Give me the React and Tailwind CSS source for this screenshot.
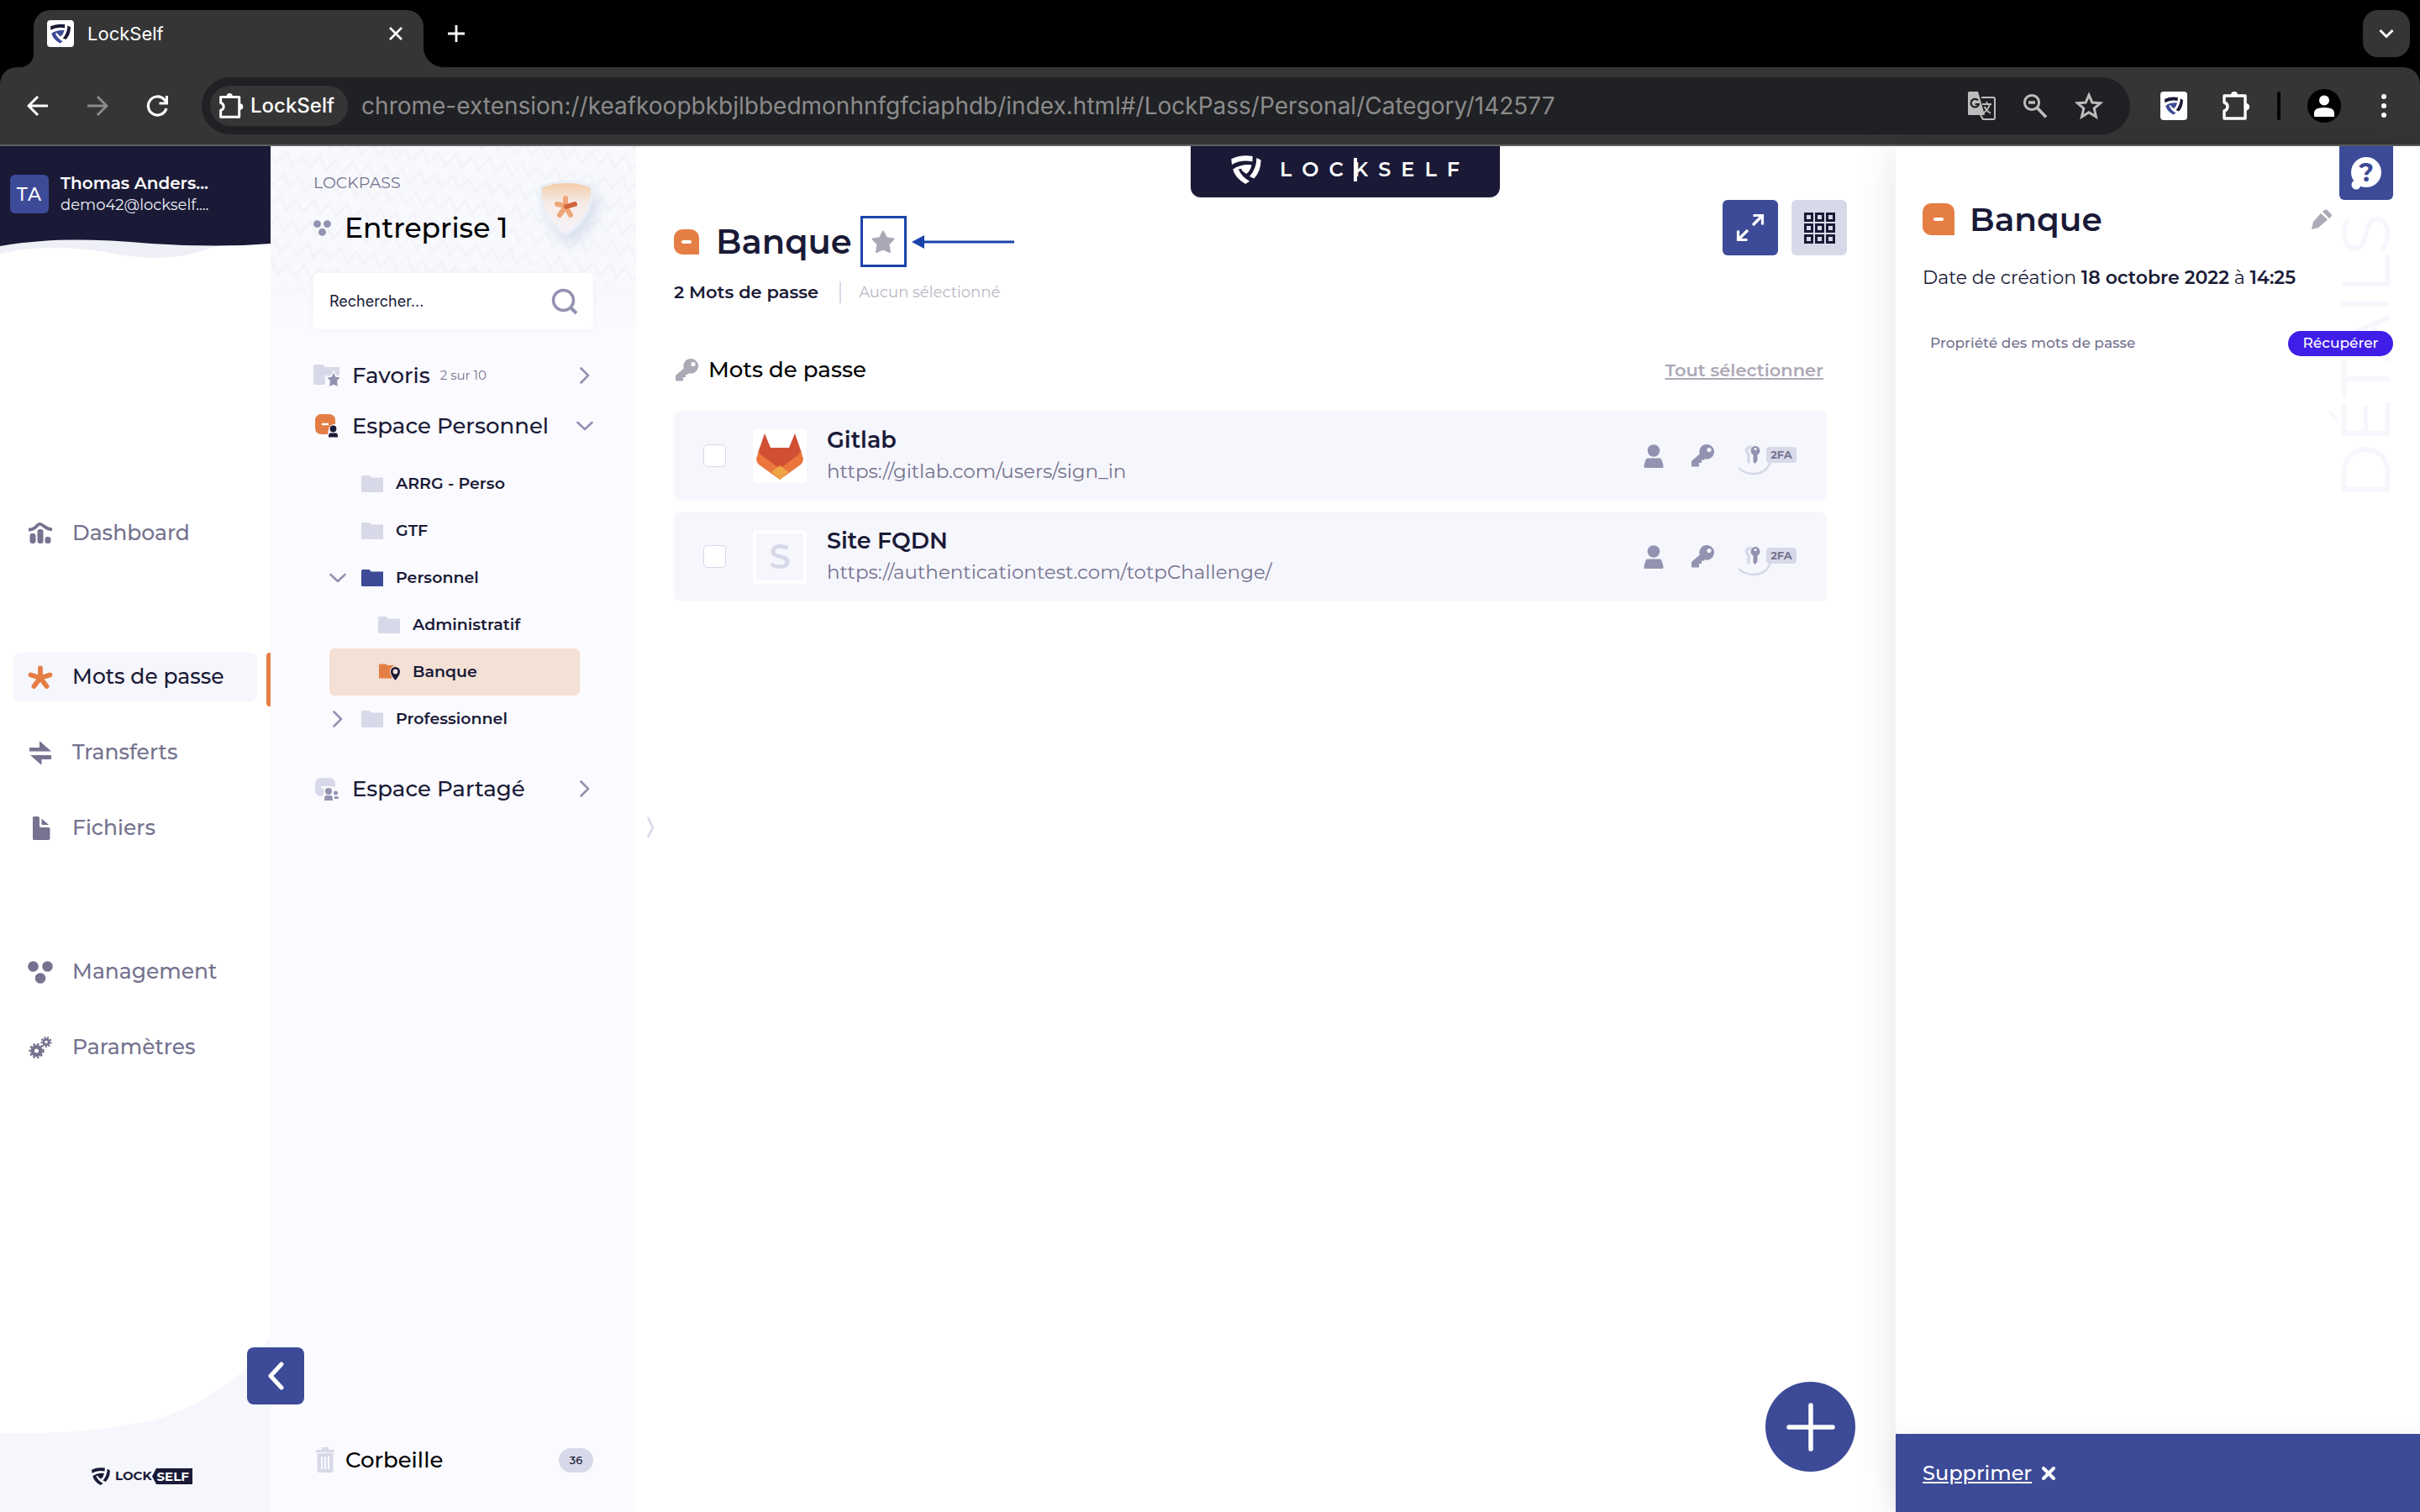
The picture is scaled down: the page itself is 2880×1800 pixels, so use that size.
import React, { useState } from "react";
import clsx from "clsx";

/* =========================
   DATA
   ========================= */
const NAV_GROUPS = [
  [{ id: "dashboard", label: "Dashboard" }],
  [
    { id: "passwords", label: "Mots de passe" },
    { id: "transfers", label: "Transferts" },
    { id: "files", label: "Fichiers" },
  ],
  [
    { id: "management", label: "Management" },
    { id: "settings", label: "Paramètres" },
  ],
];

const TREE = [
  { label: "ARRG - Perso", level: 1 },
  { label: "GTF", level: 1 },
  { label: "Personnel", level: 1, open: true, folder: "text-[#3c4a97]" },
  { label: "Administratif", level: 2 },
  { label: "Banque", level: 2, current: true },
  { label: "Professionnel", level: 1, open: false },
];

const PASSWORDS = [
  { name: "Gitlab", url: "https://gitlab.com/users/sign_in", logo: "gitlab" },
  { name: "Site FQDN", url: "https://authenticationtest.com/totpChallenge/" },
];

/* =========================
   ICONS
   ========================= */
const Shield = ({ className, accent = "currentColor" }) => (
  <svg viewBox="0 0 107 103" className={className} fill="currentColor" aria-hidden="true">
    <path d="M0 13Q35-4 77 3L76 22Q35 14 2 33Z" />
    <path d="M91 9L107 17Q106 60 82 83L66 76Q92 45 91 9Z" />
    <path fill={accent} d="M6 50Q35 30 73 34Q70 55 54 67L39 55L36 48L26 50Q38 78 66 93L51 103Q12 80 6 50Z" />
  </svg>
);

const Puzzle = ({ className }) => (
  <svg viewBox="0 0 34 36" className={className} fill="none" stroke="currentColor" strokeWidth="3.4" strokeLinejoin="round" aria-hidden="true">
    <path d="M3 6H28V33H3V24Q7 23 7 19Q7 15 3 14Z" />
    <path d="M11 5a4 4 0 0 1 8 0zM29 15a4.200 4.200 0 0 1 0 8.400z" fill="currentColor" stroke="none" />
  </svg>
);

const Chevron = ({ dir = "right", className = "text-[#9392b0]" }) => (
  <svg
    viewBox="0 0 20 20"
    className={clsx("size-5 shrink-0", className)}
    fill="none"
    stroke="currentColor"
    strokeWidth="2.600"
    strokeLinecap="round"
    strokeLinejoin="round"
    aria-hidden="true"
  >
    <path d={dir === "down" ? "M1.500 6L10 14L18.500 6" : "M5.500 1.500L14 10L5.500 18.500"} />
  </svg>
);

const Folder = ({ className = "text-[#d8d9e8]" }) => (
  <svg viewBox="0 0 26 20" className={clsx("h-5 w-[26px] shrink-0", className)} fill="currentColor" aria-hidden="true">
    <path d="M0 2Q0 0 2 0H9Q10 0 10.500 1T12 2.500H26V20H1.500Q0 20 0 18.500Z" />
  </svg>
);

const FolderPin = () => (
  <svg viewBox="0 0 26 20" className="h-5 w-[26px] shrink-0" aria-hidden="true">
    <path fill="#e57e45" d="M1 2Q1 .5 2.500 .5H9Q10 .5 10.500 2H20Q14 4 14 9.500Q14 13 17 17.500H1Z" />
    <path fill="#1a1a37" fillRule="evenodd" d="M20.500 4A5.400 5.400 0 0 1 26 9.500Q26 13.500 20.500 20Q15 13.500 15 9.500A5.400 5.400 0 0 1 20.500 4ZM20.500 6.600A2.900 2.900 0 1 0 20.500 12.400A2.900 2.900 0 1 0 20.500 6.600Z" />
  </svg>
);

const STAR = "M14 1.500L18 9.200L26.500 10.500L20.500 16.800L22 26L14 22.500L6 26L7.500 16.800L1.500 10.500L10 9.200Z";

const Star = ({ className }) => (
  <svg viewBox="0 0 28 28" className={className} fill="currentColor" stroke="currentColor" strokeWidth="2" strokeLinejoin="round" aria-hidden="true">
    <path d={STAR} />
  </svg>
);

const Key = ({ className }) => (
  <svg viewBox="0 0 27 27" className={className} fill="currentColor" aria-hidden="true">
    <path fillRule="evenodd" d="M18.500 0A8.800 8.800 0 1 1 15.600 17.200L14.500 18.800H12V22H9V26.500H0V20L9.800 11.500A8.800 8.800 0 0 1 18.500 0ZM21 4A2.600 2.600 0 1 0 21 9.200A2.600 2.600 0 1 0 21 4Z" />
  </svg>
);

const Person = ({ className }) => (
  <svg viewBox="0 0 24 28" className={className} fill="currentColor" aria-hidden="true">
    <circle cx="12" cy="7.500" r="7.300" />
    <path d="M4.500 16.500H19.500Q21 16.500 22 20Q24 26 23.500 27Q23 28 22 28H2Q.5 28 .5 26.500Q.5 24 2 20Q3 16.500 4.500 16.500Z" />
  </svg>
);

const TwoFactor = () => (
  <span className="relative flex h-9 w-[69px] items-start justify-end pt-0.5">
    <svg viewBox="0 0 69 36" className="absolute inset-0 h-9 w-[69px]" aria-hidden="true">
      <path d="M1 28Q10 35 20 34Q33 33 38 20" fill="none" stroke="#d8d9e8" strokeWidth="2.600" strokeLinecap="round" />
      <path d="M14 2Q6 5 12 11V20" fill="none" stroke="#d8d9e8" strokeWidth="3.600" strokeLinecap="round" />
      <path fill="#9392b0" fillRule="evenodd" d="M20 1A5.600 5.600 0 0 1 22.500 11.500V18L20 22L17.500 20V11.500A5.600 5.600 0 0 1 20 1ZM20 3A1.600 1.600 0 1 0 20 6.200A1.600 1.600 0 1 0 20 3Z" />
    </svg>
    <span className="relative h-[19px] w-9 rounded bg-[#d8d9e8] text-center text-[13px] leading-[19px] font-bold text-[#75738f]">2FA</span>
  </span>
);

const Dots3 = ({ className }) => (
  <svg viewBox="0 0 30 27" className={className} fill="currentColor" aria-hidden="true">
    <circle cx="6.500" cy="6.500" r="6.300" />
    <circle cx="23.500" cy="6.500" r="6.300" />
    <circle cx="15" cy="20.500" r="6.300" />
  </svg>
);

const Asterisk = ({ className }) => (
  <svg viewBox="0 0 30 28" className={className} fill="none" stroke="currentColor" strokeWidth="5.800" strokeLinecap="round" aria-hidden="true">
    <path d="M15 15V3.500M15 15L3.500 11.500M15 15L26.500 11.500M15 15L7.500 25M15 15L22.500 25" />
  </svg>
);

const Gear = ({ cx, cy, r, w }) => (
  <g fill="none" stroke="currentColor">
    <circle cx={cx} cy={cy} r={r} strokeWidth={w} />
    <circle cx={cx} cy={cy} r={r + w / 2 + 0.8} strokeWidth="2.400" strokeDasharray={r > 4 ? "2.500 2.200" : "2 1.700"} />
  </g>
);

const NavIcon = ({ id }) => {
  if (id === "passwords") return <Asterisk className="h-7 w-[30px]" />;
  if (id === "management") return <Dots3 className="h-[27px] w-[30px]" />;
  return (
    <svg viewBox="0 0 30 28" className="h-7 w-[30px]" fill="currentColor" aria-hidden="true">
      {id === "dashboard" && (
        <>
          <path d="M1 9.500Q7 9.500 10 6T15 3T20 6T29 9.500" fill="none" stroke="currentColor" strokeWidth="3.800" />
          <rect x="2.500" y="14" width="7" height="12" rx="3" />
          <rect x="11.500" y="9" width="7" height="17" rx="3" />
          <rect x="20.500" y="18" width="7" height="8" rx="3" />
        </>
      )}
      {id === "transfers" && <path d="M2 8H14V0L28 12.500H2ZM28 17V22H16.500V29L3 17Z" />}
      {id === "files" && (
        <>
          <path d="M6 1.500Q6 0 7.500 0H12Q14 0 14 2V11Q14 13 16 13H25Q26.500 13 26.500 14.500V26Q26.500 28 24.500 28H7.500Q6 28 6 26.500Z" />
          <path d="M16.500 2.500L25 10H17.500Q16.500 10 16.500 9Z" />
        </>
      )}
      {id === "settings" && (
        <>
          <Gear cx={10.5} cy={18} r={4.8} w={4.6} />
          <Gear cx={22} cy={7.5} r={3.2} w={2.8} />
        </>
      )}
    </svg>
  );
};

const Gitlab = () => (
  <svg viewBox="0 0 56 56" className="size-14" aria-hidden="true">
    <path fill="#d14f33" d="M10 1L17 18H39L46 1L54 24L28 56L2 24Z" />
    <path fill="#eb763c" d="M3 22L28 41L53 22L56 31Q56 35 53 38L28 56L3 38Q0 35 0 31Z" />
    <path fill="#d14f33" d="M10 18H46L52 25L28 43L4 25Z" />
    <path fill="#eea445" d="M28 39L38 47L28 56L18 47Z" />
  </svg>
);

// orange tile with the sharp bottom-right corner
const Tile = ({ className }) => (
  <span className={clsx("flex shrink-0 items-center justify-center rounded-[10px] rounded-br-none bg-[#e57e45]", className)}>
    <span className="h-1 w-3 rounded-full bg-white" />
  </span>
);

const SpaceIcon = ({ kind }) => (
  <svg viewBox="0 0 32 30" className="h-[30px] w-8 shrink-0" aria-hidden="true">
    {kind === "fav" && (
      <>
        <path fill="#d8d9e8" d="M0 4Q0 2 2 2H11Q13 2 13.500 5H31V15H14V26H2Q0 26 0 24Z" />
        <path fill="#9392b0" stroke="#fbfaff" strokeWidth="1.500" d="M24 10L26.800 16L33 17L28.800 21.500L29.800 29L24 26.500L18.200 29L19.200 21.500L15 17L21.200 16Z" />
      </>
    )}
    {kind === "personal" && (
      <>
        <path fill="#e57e45" d="M10 1H18Q26 1 26 9V13Q19 13 18 19L17 25H10Q2 25 2 17V9Q2 1 10 1Z" />
        <path stroke="#fff" strokeWidth="2.500" strokeLinecap="round" d="M11 13H17" />
        <circle cx="23.500" cy="18.500" r="3.900" fill="#1a1a37" />
        <path fill="#1a1a37" d="M20 23.500H27Q29 23.500 29 28.500H18Q18 23.500 20 23.500Z" />
      </>
    )}
    {kind === "shared" && (
      <>
        <path fill="#d8d9e8" d="M10 2H18Q26 2 26 10V13Q22 12 19 12H9V14Q12 14 13 17L11 24Q2 24 2 16V10Q2 2 10 2Z" />
        <circle cx="18" cy="18" r="4" fill="#9392b0" />
        <circle cx="26.500" cy="20" r="2.500" fill="#9392b0" />
        <path fill="#9392b0" d="M15 23H21Q23 23 23 29H13Q13 23 15 23ZM25 24H28Q30 24 30 27H25Z" />
      </>
    )}
  </svg>
);

/* =========================
   BROWSER
   ========================= */
const TabStrip = () => (
  <div className="flex h-20 items-end bg-black pr-3 text-white">
    <div className="size-6 shrink-0 self-end" />
    <div className="h-6 w-4 shrink-0 bg-[#353535]">
      <div className="size-full rounded-br-[16px] bg-black" />
    </div>
    <div className="flex h-[68px] w-[464px] items-center rounded-t-[20px] bg-[#353535] pr-6 pb-3 pl-4">
      <span className="flex size-8 items-center justify-center rounded-sm bg-white text-[#1a1a37]">
        <Shield className="h-6 w-6" accent="#3c4a97" />
      </span>
      <span className="ml-4 flex-1 text-[22px]">LockSelf</span>
      <button type="button" aria-label="Fermer l’onglet">
        <svg viewBox="0 0 18 18" className="size-[18px]" stroke="currentColor" strokeWidth="2.600">
          <path d="M2 2L16 16M16 2L2 16" />
        </svg>
      </button>
    </div>
    <div className="h-6 w-6 shrink-0 bg-[#353535]">
      <div className="size-full rounded-bl-[24px] bg-black" />
    </div>
    <button type="button" aria-label="Nouvel onglet" className="mb-[29px] ml-1">
      <svg viewBox="0 0 22 22" className="size-[22px]" stroke="currentColor" strokeWidth="2.800">
        <path d="M11 1V21M1 11H21" />
      </svg>
    </button>
    <button type="button" aria-label="Rechercher des onglets" className="mb-3 ml-auto flex size-14 items-center justify-center rounded-[18px] bg-[#353535]">
      <svg viewBox="0 0 18 18" className="size-[18px]" fill="none" stroke="currentColor" strokeWidth="3">
        <path d="M1.500 5L9 12.500L16.500 5" />
      </svg>
    </button>
  </div>
);

const Toolbar = () => (
  <div className="bg-black">
    <div className="flex h-[94px] items-center rounded-t-[20px] border-b-2 border-[#5f5f5f] bg-[#353535] pr-10 pl-8 text-white">
      <button type="button" aria-label="Retour">
        <svg viewBox="0 0 26 26" className="size-[26px]" fill="none" stroke="currentColor" strokeWidth="3">
          <path d="M25 13H3M13 2L2 13L13 24" />
        </svg>
      </button>
      <button type="button" aria-label="Avancer" className="ml-[45px] text-[#8b8b8b]">
        <svg viewBox="0 0 26 26" className="size-[26px]" fill="none" stroke="currentColor" strokeWidth="3">
          <path d="M1 13H23M13 2L24 13L13 24" />
        </svg>
      </button>
      <button type="button" aria-label="Actualiser" className="ml-[45px]">
        <svg viewBox="0 0 26 26" className="size-[26px]" fill="none" stroke="currentColor" strokeWidth="3.200">
          <path d="M24 16A11 11 0 1 1 21.500 5.500L24.500 9M24.500 1V10H15.500" />
        </svg>
      </button>
      <div className="ml-10 flex h-[68px] flex-1 items-center rounded-full bg-[#202124] pr-8 pl-2.5">
        <span className="flex h-12 items-center gap-2 rounded-full bg-[#353535] pr-4 pl-2.5 text-[24px] font-medium">
          <Puzzle className="h-8 w-[30px]" />
          LockSelf
        </span>
        <span className="ml-4 flex-1 text-[28px] text-[#8b8b8b]">
          chrome-extension://keafkoopbkbjlbbedmonhnfgfciaphdb/index.html#/LockPass/Personal/Category/142577
        </span>
        <div className="flex items-center gap-8 text-[#bdbdbd]">
          <button type="button" aria-label="Traduire">
            <svg viewBox="0 0 34 36" className="h-9 w-[34px]" aria-hidden="true">
              <path d="M17 8H31Q33 8 33 10V32Q33 34 31 34H19L16 29" fill="none" stroke="currentColor" strokeWidth="2" />
              <path d="M2.500 1H13L21 29H2.500Q1 29 1 27.500V2.500Q1 1 2.500 1Z" fill="currentColor" />
              <path d="M13 11.500A4.800 4.800 0 1 0 14 16H9.500" fill="none" stroke="#202124" strokeWidth="2.200" />
              <path d="M18 16H29M23.500 13V16M27 16Q25 23 19 27M20.500 19Q23 24 28 27" fill="none" stroke="currentColor" strokeWidth="1.800" />
            </svg>
          </button>
          <button type="button" aria-label="Zoom">
            <svg viewBox="0 0 30 30" className="size-[30px]" fill="none" stroke="currentColor" strokeWidth="3" aria-hidden="true">
              <circle cx="11" cy="11" r="8.600" />
              <path d="M17.500 17.500L28 28.500M7 11H15" strokeWidth="3.600" />
            </svg>
          </button>
          <button type="button" aria-label="Ajouter aux favoris">
            <svg viewBox="0 0 34 34" className="size-[34px]" fill="none" stroke="currentColor" strokeWidth="3" aria-hidden="true">
              <path d="M17 4L20.800 13L30.500 13.800L23.200 20L25.500 30L17 24.800L8.500 30L10.800 20L3.500 13.800L13.200 13Z" />
            </svg>
          </button>
        </div>
      </div>
      <button type="button" aria-label="Extension LockSelf" className="ml-9 flex h-[34px] w-8 items-center justify-center rounded bg-white text-[#1a1a37]">
        <Shield className="h-[22px] w-[22px]" accent="#3c4a97" />
      </button>
      <button type="button" aria-label="Extensions" className="ml-[41px]">
        <Puzzle className="h-9 w-[34px]" />
      </button>
      <span className="ml-8 h-[34px] w-1 rounded-full bg-black" />
      <button type="button" aria-label="Profil" className="ml-8 flex size-10 items-center justify-center rounded-full bg-black">
        <svg viewBox="0 0 24 26" className="h-[26px] w-6" fill="currentColor" aria-hidden="true">
          <circle cx="12" cy="6.500" r="6" />
          <path d="M0 26V21Q0 15 12 15T24 21V26Z" />
        </svg>
      </button>
      <button type="button" aria-label="Menu" className="ml-12 flex flex-col gap-[5px]">
        <span className="size-1.5 rounded-full bg-white" />
        <span className="size-1.5 rounded-full bg-white" />
        <span className="size-1.5 rounded-full bg-white" />
      </button>
    </div>
  </div>
);

/* =========================
   LEFT RAIL
   ========================= */
const Rail = () => (
  <aside className="relative flex w-[322px] shrink-0 flex-col bg-white">
    <div className="relative h-[136px]">
      <svg viewBox="0 0 322 136" preserveAspectRatio="none" className="absolute inset-0 size-full" aria-hidden="true">
        <path fill="#eff0f7" d="M0 100H322V112Q275 113 255 120Q220 133 185 133Q160 133 125 126Q55 115 0 128Z" />
        <path fill="#1a1a37" d="M0 0H322V116Q260 121 180 116Q100 109 50 113Q20 115 0 119Z" />
      </svg>
      <div className="relative flex items-center pt-[31px] pl-3 text-white">
        <span className="flex size-[46px] items-center justify-center rounded-md bg-[#3c4a97] text-[22px] font-medium tracking-wider">TA</span>
        <div className="ml-3.5">
          <p className="text-[20px] leading-[26px] font-semibold">Thomas Anders...</p>
          <p className="text-[18px] leading-[26px] text-[#eff0f7]">demo42@lockself....</p>
        </div>
      </div>
    </div>

    <nav className="mt-[296px] flex flex-col gap-[113px]">
      {NAV_GROUPS.map((group) => (
        <ul key={group[0].id} className="flex flex-col gap-8">
          {group.map((item) => {
            const active = item.id === "passwords";
            return (
              <li key={item.id} className="flex justify-between">
                <a
                  href={`#${item.id}`}
                  className={clsx(
                    "ml-4 flex h-[58px] w-[290px] items-center gap-[23px] rounded-lg pl-[17px] text-[25px] font-medium",
                    active ? "bg-[#f6f6fd] text-[#1a1a37]" : "text-[#75738f]",
                  )}
                >
                  <span className={clsx(active && "text-[#e57e45]")}>
                    <NavIcon id={item.id} />
                  </span>
                  {item.label}
                </a>
                {active && <span className="-mb-1.5 w-[5px] rounded-l bg-[#e57e45]" />}
              </li>
            );
          })}
        </ul>
      ))}
    </nav>

    <div className="relative mt-auto flex h-[220px] items-end pb-8 pl-[109px]">
      <svg viewBox="0 0 322 220" preserveAspectRatio="none" className="absolute inset-0 size-full" aria-hidden="true">
        <path fill="#f6f6fd" d="M0 126Q110 128 185 110Q245 92 294 48L322 10V220H0Z" />
      </svg>
      <span className="relative flex h-[22px] items-center text-[15px] font-bold text-[#1a1a37]">
        <Shield className="mr-1.5 h-[21px] w-[22px]" />
        LOCK
        <svg viewBox="0 0 6 19" className="h-[19px] w-1.5" fill="currentColor" aria-hidden="true">
          <path d="M6 0V19H5L0 9.500L5 0Z" />
        </svg>
        <span className="bg-[#1a1a37] pr-1 leading-[19px] text-white">SELF</span>
      </span>
    </div>

    <button
      type="button"
      aria-label="Réduire le menu"
      className="absolute bottom-32 left-[294px] z-10 flex size-[68px] items-center justify-center rounded-lg bg-[#3c4a97] text-white"
    >
      <svg viewBox="0 0 20 34" className="h-[34px] w-5" fill="none" stroke="currentColor" strokeWidth="5" strokeLinecap="round" strokeLinejoin="round">
        <path d="M17 3L4 17L17 31" />
      </svg>
    </button>
  </aside>
);

/* =========================
   CATEGORIES
   ========================= */
const Space = ({ kind, label, hint, dir }) => (
  <button type="button" className="flex h-[60px] w-full items-center text-left">
    <SpaceIcon kind={kind} />
    <span className="ml-3.5 text-[26px] font-medium text-[#1a1a37]">{label}</span>
    {hint && <span className="ml-3 text-[15px] text-[#75738f]">{hint}</span>}
    <Chevron dir={dir} className="ml-auto text-[#9392b0]" />
  </button>
);

const Categories = () => {
  const [query, setQuery] = useState("");

  return (
    <section className="relative flex w-[435px] shrink-0 flex-col bg-[#fbfaff] pr-[51px] pl-[51px]">
      {/* woven header background */}
      <svg className="absolute inset-x-0 top-0 h-[210px] w-full" aria-hidden="true">
        <defs>
          <pattern id="weave" width="40" height="26" patternUnits="userSpaceOnUse" patternTransform="rotate(8)">
            <rect width="40" height="26" fill="#f8f9fc" />
            <path d="M0 8L9 20L20 4L29 20L40 4" fill="none" stroke="#f2f4f9" strokeWidth="3" />
          </pattern>
          <linearGradient id="weaveFade" x1="0" x2="0" y1="0" y2="1">
            <stop offset=".7" stopColor="#fbfaff" stopOpacity="0" />
            <stop offset="1" stopColor="#fbfaff" />
          </linearGradient>
        </defs>
        <rect width="100%" height="100%" fill="url(#weave)" />
        <rect width="100%" height="100%" fill="url(#weaveFade)" />
      </svg>

      <div className="relative flex h-[151px] justify-between pt-[31px]">
        <div>
          <p className="text-[19px] leading-[26px] text-[#75738f]">LOCKPASS</p>
          <h2 className="mt-5 flex items-center gap-4 text-[33px] leading-10 font-medium text-black">
            <Dots3 className="h-[19px] w-[21px] text-[#9392b0]" />
            Entreprise 1
          </h2>
        </div>
        <svg viewBox="0 0 80 90" className="mt-1 -mr-2 h-[90px] w-20 overflow-visible" aria-hidden="true">
          <defs>
            <linearGradient id="shieldFill" x1="0" x2="0" y1="0" y2="1">
              <stop offset="0" stopColor="#f3cba3" />
              <stop offset=".4" stopColor="#f6ebe8" />
              <stop offset="1" stopColor="#f5f3f8" />
            </linearGradient>
            <filter id="shieldShadow" x="-50%" y="-50%" width="200%" height="200%">
              <feDropShadow dx="6" dy="10" stdDeviation="8" floodColor="#b9c5e2" floodOpacity=".5" />
            </filter>
          </defs>
          <path
            d="M10 13Q40 2 70 13Q74 45 42 69Q39 71 36 69Q6 45 10 13Z"
            fill="url(#shieldFill)"
            stroke="#eaeef8"
            strokeWidth="3"
            filter="url(#shieldShadow)"
          />
          <g fill="none" strokeWidth="6" strokeLinecap="round">
            <path stroke="#eea578" d="M39 36V27M39 36L29 34M39 37L32 47M39 37L45 47" />
            <path stroke="#d2673c" d="M40 37L50 34" />
          </g>
        </svg>
      </div>

      <label className="relative flex h-[67px] items-center rounded-md bg-white pr-[18px] pl-[19px] shadow-[0_2px_10px_rgba(26,26,55,0.04)]">
        <input
          value={query}
          onChange={(e) => setQuery(e.target.value)}
          placeholder="Rechercher..."
          aria-label="Rechercher"
          className="w-0 flex-1 bg-transparent font-[Inter,sans-serif] text-[18px] text-[#1a1a37] outline-none placeholder:text-[#1a1a37]"
        />
        <svg viewBox="0 0 32 32" className="size-8 text-[#9392b0]" fill="none" stroke="currentColor" strokeWidth="3.400" aria-hidden="true">
          <circle cx="14.500" cy="14.500" r="12" />
          <path d="M23 23L30 30" strokeWidth="4" />
        </svg>
      </label>

      <div className="mt-[25px]">
        <Space kind="fav" label="Favoris" hint="2 sur 10" dir="right" />
        <Space kind="personal" label="Espace Personnel" dir="down" />
      </div>

      <ul className="mt-[11px] mr-4 ml-[19px]">
        {TREE.map((node) => (
          <li
            key={node.label}
            className={clsx("flex h-14 items-center rounded-md", node.current && "bg-[#f4e0d5]", node.level === 2 && "pl-5")}
          >
            <span className="flex w-[38px] shrink-0">
              {node.open !== undefined && (
                <button type="button" aria-label={`Déplier ${node.label}`}>
                  <Chevron dir={node.open ? "down" : "right"} />
                </button>
              )}
            </span>
            <a href="#dossier" className="flex items-center gap-[15px] text-[19px] font-semibold text-[#1a1a37]">
              {node.current ? <FolderPin /> : <Folder className={node.folder} />}
              {node.label}
            </a>
          </li>
        ))}
      </ul>

      <div className="mt-[25px]">
        <Space kind="shared" label="Espace Partagé" dir="right" />
      </div>

      <button type="button" className="mt-auto mb-8 flex h-[60px] items-center text-[26px] font-medium text-black">
        <svg viewBox="0 0 22 30" className="ml-[3px] h-[30px] w-[22px] text-[#d8d9e8]" fill="currentColor" aria-hidden="true">
          <path d="M0 3H7V0H15V3H22V6H0Z" />
          <path fillRule="evenodd" d="M1.500 7H20.500V28Q20.500 30 18.500 30H3.500Q1.500 30 1.500 28ZM6 11V26H8V11ZM10 11V26H12V11ZM14 11V26H16V11Z" />
        </svg>
        <span className="ml-[13px]">Corbeille</span>
        <span className="ml-auto w-[41px] rounded-full bg-[#d8d9e8] text-center text-[13px] leading-[29px] text-[#1a1a37]">36</span>
      </button>
    </section>
  );
};

/* =========================
   PASSWORD LIST
   ========================= */
const PasswordRow = ({ item }) => (
  <li className="flex h-[107px] items-center rounded-lg bg-[#f6f6fd] pr-9 pl-[35px]">
    <input
      type="checkbox"
      aria-label={`Sélectionner ${item.name}`}
      className="size-[27px] appearance-none rounded-[5px] border border-[#d8d9e8] bg-white"
    />
    <span className="ml-8 flex size-16 items-center justify-center rounded bg-white">
      {item.logo === "gitlab" ? (
        <Gitlab />
      ) : (
        <span className="flex size-14 items-center justify-center bg-[#f6f6fd] text-[40px] font-semibold text-[#d8d9e8]">
          {item.name[0]}
        </span>
      )}
    </span>
    <div className="ml-6 flex-1">
      <p className="text-[27px] leading-9 font-semibold text-[#1a1a37]">{item.name}</p>
      <p className="text-[23px] leading-[38px] text-[#75738f]">{item.url}</p>
    </div>
    <div className="flex items-center text-[#9392b0]">
      <button type="button" aria-label="Copier l’identifiant">
        <Person className="h-7 w-6" />
      </button>
      <button type="button" aria-label="Copier le mot de passe" className="ml-[33px]">
        <Key className="size-[27px]" />
      </button>
      <button type="button" aria-label="Code 2FA" className="mt-2.5 ml-[29px]">
        <TwoFactor />
      </button>
    </div>
  </li>
);

const Main = () => (
  <main className="relative flex-1 bg-white pt-16 pr-[82px] pl-[45px]">
    <div className="-mr-6 flex items-start justify-between">
      <div className="flex items-center pt-[19px]">
        <Tile className="size-[30px]" />
        <h1 className="ml-5 text-[40px] leading-[60px] font-semibold text-[#1a1a37]">Banque</h1>
        <button
          type="button"
          aria-label="Ajouter aux favoris"
          className="ml-2.5 flex h-[61px] w-[55px] items-center justify-center border-3 border-[#1a44aa] text-[#aca8b6]"
        >
          <Star className="size-7" />
        </button>
        <svg viewBox="0 0 122 16" className="ml-1.5 h-4 w-[122px]" aria-hidden="true">
          <path fill="#1a44aa" d="M0 8L15 0V6.500H122V9.500H15V16Z" />
        </svg>
      </div>
      <div className="flex gap-4">
        <button type="button" aria-label="Agrandir" className="flex size-[66px] items-center justify-center rounded-md bg-[#3c4a97] text-white">
          <svg viewBox="0 0 34 34" className="size-[34px]" fill="none" stroke="currentColor" strokeWidth="3.200">
            <path d="M20 14L31 3M20.500 2.500H31.500V13.500M14 20L3 31M2.500 20.500V31.500H13.500" />
          </svg>
        </button>
        <button type="button" aria-label="Affichage en grille" className="grid size-[66px] place-content-center rounded-md bg-[#d8d9e8]">
          <span className="grid grid-cols-3 gap-0.5">
            {Array.from({ length: 9 }, (_, i) => (
              <span key={i} className="size-[11px] border-3 border-[#1a1a37]" />
            ))}
          </span>
        </button>
      </div>
    </div>

    <div className="mt-[17px] flex h-[26px] items-center">
      <span className="text-[21px] font-semibold text-[#1a1a37]">2 Mots de passe</span>
      <span className="mr-[21px] ml-[25px] h-[26px] w-0.5 bg-[#d8d9e8]" />
      <span className="text-[18px] text-[#bab7c2]">Aucun sélectionné</span>
    </div>

    <div className="mt-[63px] flex h-8 items-center">
      <Key className="ml-0.5 size-[27px] text-[#aca8b6]" />
      <h2 className="ml-3 text-[26px] font-medium text-black">Mots de passe</h2>
      <button type="button" className="mt-0.5 mr-1 ml-auto text-[21px] font-semibold text-[#aca8b6] underline">
        Tout sélectionner
      </button>
    </div>

    <ul className="mt-[33px] flex flex-col gap-[13px]">
      {PASSWORDS.map((item) => (
        <PasswordRow key={item.name} item={item} />
      ))}
    </ul>

    <button type="button" aria-label="Déplier le panneau" className="absolute top-[798px] left-3 text-[#d8d9e8]">
      <svg viewBox="0 0 10 26" className="h-[26px] w-2.5" fill="none" stroke="currentColor" strokeWidth="2.500">
        <path d="M2 1L8 13L2 25" />
      </svg>
    </button>

    <button
      type="button"
      aria-label="Ajouter"
      className="absolute right-12 bottom-12 flex size-[107px] items-center justify-center rounded-full bg-[#3c4a97] text-white"
    >
      <svg viewBox="0 0 58 58" className="size-[58px]" stroke="currentColor" strokeWidth="5.500" strokeLinecap="round">
        <path d="M29 3V55M3 29H55" />
      </svg>
    </button>
  </main>
);

/* =========================
   DETAILS
   ========================= */
const Details = () => (
  <aside className="relative flex w-[624px] shrink-0 flex-col bg-white px-8 pt-16 shadow-[0_0_48px_rgba(0,0,0,0.1)]">
    <span className="absolute top-20 right-6 rotate-180 text-[80px] leading-[80px] text-[#f6f6fd] [writing-mode:vertical-rl]">
      DÉTAILS
    </span>
    <button
      type="button"
      aria-label="Aide"
      className="absolute top-0 right-8 flex size-16 items-center justify-center rounded-b-md bg-[#3c4a97]"
    >
      <svg viewBox="0 0 36 40" className="absolute h-10 w-9" fill="#fff" aria-hidden="true">
        <circle cx="18" cy="19" r="18" />
        <circle cx="6" cy="34" r="5.500" />
      </svg>
      <span className="relative text-[30px] leading-8 font-bold text-[#3c4a97]">?</span>
    </button>

    <div className="relative flex h-[46px] items-center">
      <Tile className="size-[38px]" />
      <h2 className="ml-[18px] text-[39px] leading-[46px] font-semibold text-[#1a1a37]">Banque</h2>
      <button type="button" aria-label="Modifier" className="mr-[73px] ml-auto text-[#aca8b6]">
        <svg viewBox="0 0 24 24" className="size-6" fill="currentColor" aria-hidden="true">
          <path d="M11 5L19 12.500L8 22L0 24L2 15ZM13 3L15.500 .8Q17 -.3 18.500 1L23 5.500Q24.500 7 23.500 8.500L21 11Z" />
        </svg>
      </button>
    </div>
    <p className="relative mt-8 text-[22px] leading-[30px] text-[#1a1a37]">
      Date de création <b className="font-semibold">18 octobre 2022</b> à <b className="font-semibold">14:25</b>
    </p>
    <div className="relative mt-12 flex h-[30px] items-center justify-between pl-[9px]">
      <span className="text-[17px] font-medium text-[#75738f]">Propriété des mots de passe</span>
      <button type="button" className="h-[30px] w-[125px] rounded-full bg-[#401ee8] text-[17px] font-medium text-white">
        Récupérer
      </button>
    </div>

    <div className="-mx-8 mt-auto flex h-[93px] items-center bg-[#3c4a97] pl-8 text-white shadow-[0_0_24px_rgba(0,0,0,0.06)]">
      <button type="button" className="flex items-center gap-3 text-[24px] font-medium">
        <span className="underline">Supprimer</span>
        <svg viewBox="0 0 16 16" className="size-4" stroke="currentColor" strokeWidth="4" strokeLinecap="round" aria-hidden="true">
          <path d="M2 2L14 14M14 2L2 14" />
        </svg>
      </button>
    </div>
  </aside>
);

const App = () => {
  return (
    <div className="flex min-h-screen flex-col bg-white font-['Montserrat',Inter,sans-serif]">
      <header className="font-[Inter,sans-serif]">
        <TabStrip />
        <Toolbar />
      </header>

      <div className="flex flex-1">
        <Rail />
        <div className="relative flex flex-1">
          <Categories />
          <Main />
          <Details />

          <div className="absolute top-0 left-1/2 flex h-[61px] w-[368px] -translate-x-1/2 items-center justify-center gap-[22px] rounded-b-xl bg-[#1a1a37] pb-1.5 text-white">
            <Shield className="h-[34px] w-9" />
            <span className="flex gap-3 text-[24px] leading-[26px] font-semibold">
              {"LOCKSELF".split("").map((c, i) => (
                <span key={i} className="relative">
                  {c === "K" && <span className="absolute -inset-y-px left-0 w-1 bg-white" />}
                  {c}
                </span>
              ))}
            </span>
          </div>
        </div>
      </div>
    </div>
  );
};

export default App;
